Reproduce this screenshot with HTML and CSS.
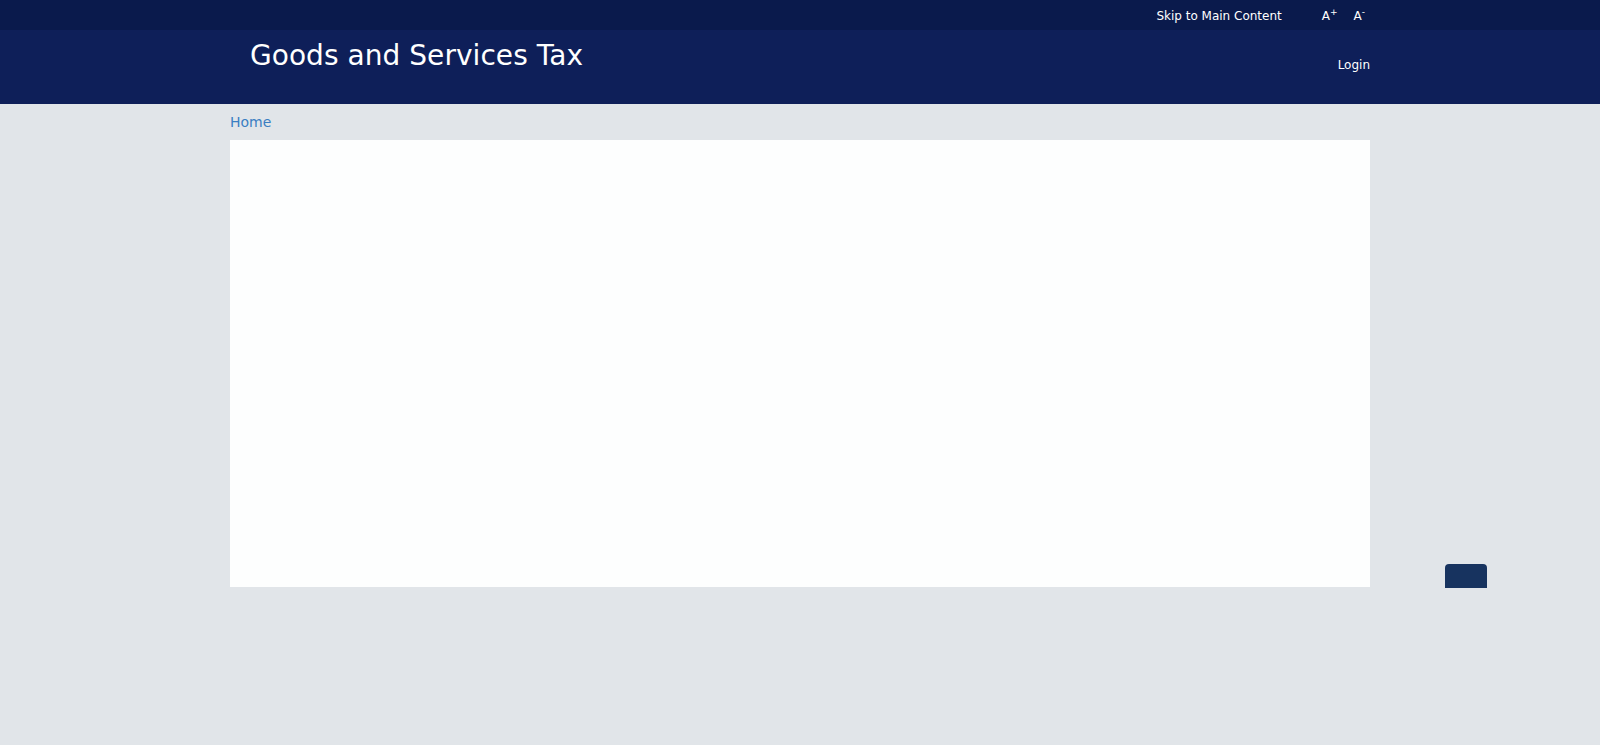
FILE: index.html
```html
<!DOCTYPE html>
<html lang="en">
<head>
<meta charset="utf-8">
<title>Goods and Services Tax</title>
<link rel="stylesheet" href="styles.css">
</head>
<body>
<div class="topbar">
  <div class="container topbar-inner">
    <a class="skip" href="#main">Skip to Main Content</a>
    <span class="fontctl">A<sup>+</sup></span>
    <span class="fontctl">A<sup>-</sup></span>
  </div>
</div>
<header class="header">
  <div class="container header-inner">
    <h1 class="title">Goods and Services Tax</h1>
    <a class="login" href="#">Login</a>
  </div>
</header>
<main class="container" id="main">
  <div class="breadcrumb"><a href="#">Home</a></div>
  <div class="panel"></div>
</main>
<div class="float-btn"></div>
</body>
</html>
```
FILE: styles.css
```css
* { box-sizing: border-box; }
html, body { margin: 0; padding: 0; }
body {
  background: #e1e5e9;
  font-family: "DejaVu Sans", Verdana, sans-serif;
  color: #333;
  height: 745px;
  overflow: hidden;
}
a { text-decoration: none; }
.container {
  width: 1170px;
  margin: 0 auto;
  padding: 0 15px;
}
.topbar {
  background: #0a1a4c;
  height: 30px;
}
.topbar-inner {
  display: flex;
  justify-content: flex-end;
  align-items: center;
  height: 30px;
  font-size: 12px;
  line-height: 30px;
  padding-top: 1px;
  padding-right: 20px;
}
.skip {
  color: #ffffff;
  margin-right: 40px;
}
.fontctl {
  color: #ffffff;
  margin-left: 16px;
  position: relative;
}
.skip + .fontctl { margin-left: 0; }
.fontctl sup {
  font-size: 9px;
  line-height: 0;
  vertical-align: 5px;
}
.header {
  background: #0e1f59;
  height: 74px;
}
.header-inner {
  display: flex;
  justify-content: space-between;
  align-items: flex-start;
  height: 74px;
}
.title {
  margin: 9px 0 0 20px;
  font-size: 28px;
  font-weight: normal;
  line-height: normal;
  letter-spacing: 0.05px;
  color: #ffffff;
}
.login {
  margin-top: 28px;
  color: #ffffff;
  font-size: 12px;
  line-height: normal;
}
.breadcrumb {
  margin-top: 10px;
  font-size: 14px;
  line-height: normal;
  height: 26px;
}
.breadcrumb a { color: #3a7ec2; }
.panel {
  background: #fdfefe;
  height: 447px;
}
.float-btn {
  position: fixed;
  left: 1445px;
  top: 564px;
  width: 42px;
  height: 24px;
  background: #17335f;
  border-radius: 4px 4px 0 0;
}
```
